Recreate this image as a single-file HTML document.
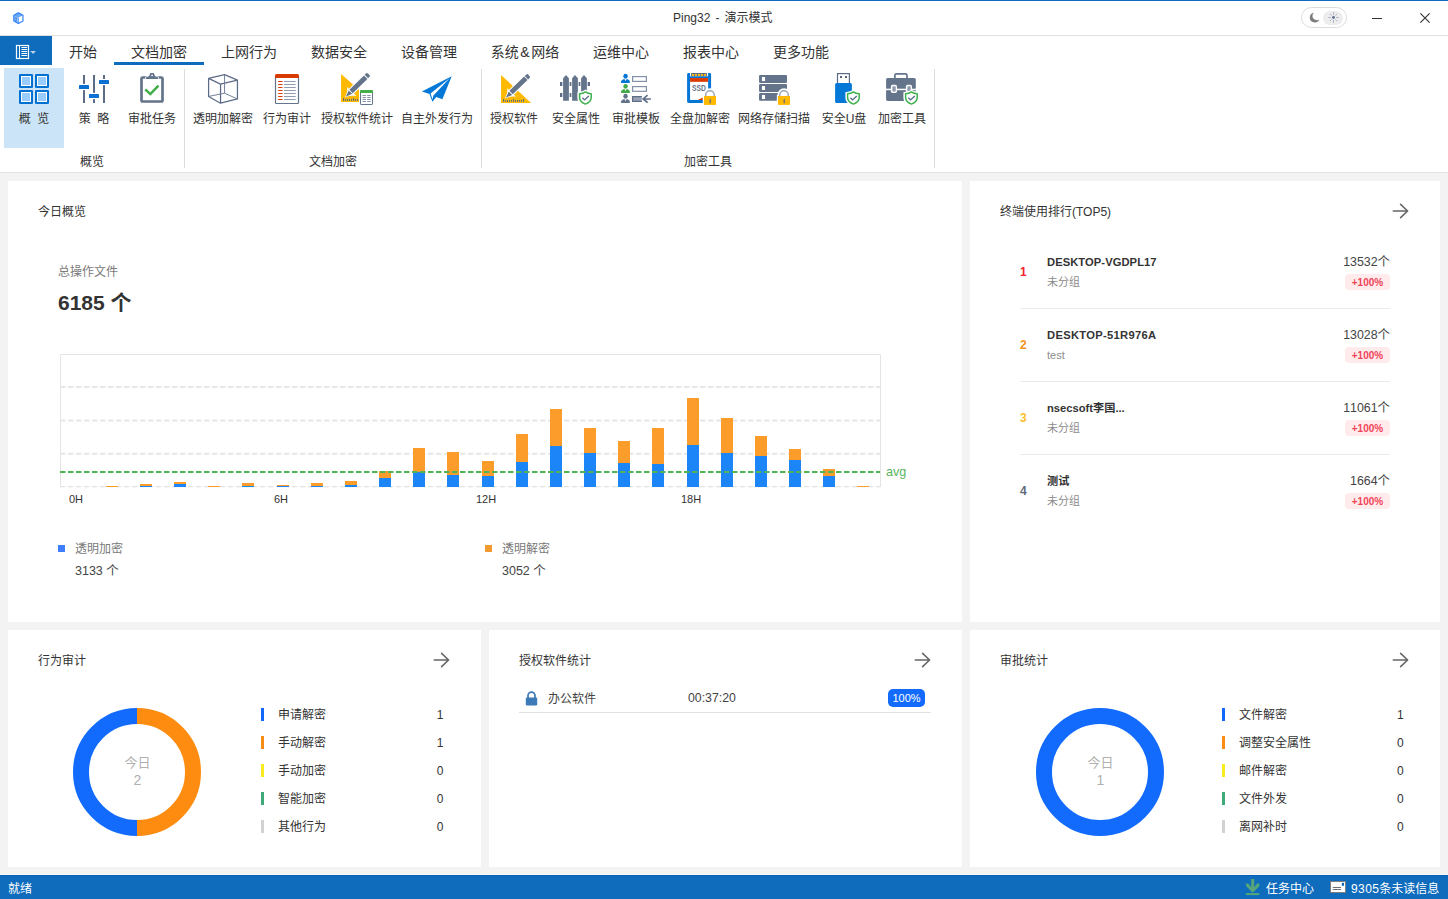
<!DOCTYPE html>
<html lang="zh-CN">
<head>
<meta charset="utf-8">
<title>Ping32 - 演示模式</title>
<style>
*{box-sizing:border-box;margin:0;padding:0}
html,body{width:1448px;height:899px;overflow:hidden;background:#f3f3f3}
body{position:relative;font-family:"Liberation Sans","Noto Sans CJK SC",sans-serif;font-size:12px;color:#333;-webkit-font-smoothing:antialiased}
.abs{position:absolute}
/* title bar */
#topline{position:absolute;left:0;top:0;width:1448px;height:1px;background:#0f6cbd}
#titlebar{position:absolute;left:0;top:1px;width:1448px;height:34px;background:#fff}
#titlesep{position:absolute;left:0;top:35px;width:1448px;height:1px;background:#e1e1e1}
#title{position:absolute;left:673px;top:10px;white-space:nowrap;font-size:12px;line-height:17px;color:#333;word-spacing:1.7px}
/* tabs */
#tabrow{position:absolute;left:0;top:36px;width:1448px;height:30px;background:#fff}
#filebtn{position:absolute;left:0;top:0;width:52px;height:29px;background:#0f6cbd}
.tab{position:absolute;top:0;height:30px;line-height:33px;font-size:14px;color:#333;text-align:center;white-space:nowrap}
.tab.on::after{content:"";position:absolute;left:0;right:0;top:26px;height:3px;background:#0f6cbd}
/* ribbon */
#ribbon{position:absolute;left:0;top:66px;width:1448px;height:106px;background:#fff}
#ribbonsep{position:absolute;left:0;top:172px;width:1448px;height:1px;background:#e3e3e3}
.rb{position:absolute;top:2px;height:80px;text-align:center;white-space:nowrap;font-size:12px;color:#333}
.rb.on{background:#cce4f7}
.rb .lbl{position:absolute;left:-20px;right:-20px;top:43px;line-height:16px;text-align:center}
.rb svg{position:absolute;top:5px;left:50%;margin-left:-16px;width:32px;height:32px;overflow:visible}
.gsep{position:absolute;top:3px;width:1px;height:99px;background:#dcdcdc}
.glbl{position:absolute;top:88px;line-height:16px;font-size:12px;color:#333;text-align:center;white-space:nowrap}
/* cards */
.card{position:absolute;background:#fff}
.ctitle{position:absolute;left:30px;top:23px;font-size:12px;line-height:16px;color:#333;white-space:nowrap}
.carrow{position:absolute;right:31px;top:22px;width:16px;height:16px}
/* card B rows */
.rk{font-size:12px;line-height:16px;font-weight:bold;width:10px;text-align:left}
.nm{font-size:11.2px;line-height:16px;font-weight:bold;color:#333;white-space:nowrap}
.gp{font-size:11px;line-height:16px;color:#8c8c8c;white-space:nowrap}
.vl{font-size:12.4px;line-height:16px;color:#444;white-space:nowrap;font-kerning:none}
.bd{width:45px;height:16px;border-radius:4px;background:#ffebec;color:#f04458;font-size:10px;line-height:17px;font-weight:bold;text-align:center}
.dn1{font-size:13px;line-height:16px;color:#b0b0b0;text-align:center}
.dn2{font-size:14px;line-height:16px;color:#b0b0b0;text-align:center}
.lt{font-size:12px;line-height:16px;color:#333;white-space:nowrap}
.lv{font-size:12px;line-height:16px;color:#333;white-space:nowrap}
/* status */
#status{position:absolute;left:0;top:875px;width:1448px;height:24px;background:#0f6cbd;color:#fff;font-size:12px;line-height:24px}
</style>
</head>
<body>
<div id="topline"></div>
<div id="titlebar"></div>
<div id="title">Ping32 - 演示模式</div>
<div id="titlesep"></div>
<svg class="abs" style="left:12.7px;top:11.75px" width="11.57" height="12.46" viewBox="0 0 13 14"><path d="M6.05,0.9L11.2,3.6V10L6.05,12.8L0.9,10V3.6Z" fill="#fff"/><path d="M6.05,0.9L11.2,3.6L6.05,6.3L0.9,3.6Z" fill="#5a9df9"/><path d="M0.9,3.6L6.05,6.3V12.8L0.9,10Z" fill="#7fb8fb"/><path d="M3.5,5.6V10.6" stroke="#2563d6" stroke-width="0.9"/><path d="M4.9,6.2V11.4" stroke="#b9dcff" stroke-width="0.7"/><path d="M3.4,2.4L8.6,5M5.9,1.2L11,3.9" stroke="#a8d0fd" stroke-width="0.5"/><path d="M6.05,0.9L11.2,3.6V10L6.05,12.8L0.9,10V3.6Z" fill="none" stroke="#2f7ff5" stroke-width="1.3" stroke-linejoin="round"/><path d="M6.05,6.5V12.6" stroke="#3b88f6" stroke-width="0.8"/></svg>
<div class="abs" style="left:1301px;top:7px;width:46px;height:21px;border:1px solid #dcdcdc;border-radius:11px;background:#fff"></div>
<div class="abs" style="left:1323px;top:10.5px;width:20px;height:14px;border-radius:7px;background:#ededed"></div>
<svg class="abs" style="left:1308px;top:11px" width="13" height="13" viewBox="0 0 13 13"><path d="M6,1.7A4.9,4.9 0 1 0 11.3,8.2A3.9,3.9 0 0 1 6,1.7Z" fill="#7d7d7d"/></svg>
<svg class="abs" style="left:1327px;top:11px" width="13" height="13" viewBox="-6.5 -6.5 13 13"><circle r="1.4" fill="#5f6f92"/><g stroke="#8b96ad" stroke-width="0.7" stroke-linecap="round"><path d="M0,-3.1V-4.8M0,3.1V4.8M-3.1,0H-4.8M3.1,0H4.8M-2.2,-2.2L-3.3,-3.3M2.2,2.2L3.3,3.3M-2.2,2.2L-3.3,3.3M2.2,-2.2L3.3,-3.3"/></g></svg>
<div class="abs" style="left:1372px;top:18px;width:10px;height:1px;background:#333"></div>
<svg class="abs" style="left:1419px;top:12px" width="12" height="12" viewBox="0 0 12 12"><path d="M1.4,1.4L10.6,10.6M10.6,1.4L1.4,10.6" stroke="#333" stroke-width="1.15" fill="none"/></svg>

<div id="tabrow">
  <div id="filebtn"><svg class="abs" style="left:15px;top:8px" width="23" height="16" viewBox="0 0 23 16"><rect x="1.5" y="1.5" width="12" height="13" fill="none" stroke="#fff" stroke-width="1.2"/><path d="M4.5,1.5V14.5" stroke="#fff" stroke-width="1"/><path d="M6.4,3.5h5.8M6.4,5.5h5.8M6.4,7.5h5.8M6.4,9.5h5.8M6.4,11.5h5.8" stroke="#fff" stroke-width="1"/><path d="M15.3,7H20.9L18.1,9.9Z" fill="#bdd6ee"/></svg></div>
  <div class="tab" style="left:52px;width:62px">开始</div>
  <div class="tab on" style="left:114px;width:90px">文档加密</div>
  <div class="tab" style="left:204px;width:90px">上网行为</div>
  <div class="tab" style="left:294px;width:90px">数据安全</div>
  <div class="tab" style="left:384px;width:90px">设备管理</div>
  <div class="tab" style="left:474px;width:102px">系统<span style="margin:0 1.7px">&amp;</span>网络</div>
  <div class="tab" style="left:576px;width:90px">运维中心</div>
  <div class="tab" style="left:666px;width:90px">报表中心</div>
  <div class="tab" style="left:756px;width:90px">更多功能</div>
</div>

<div id="ribbon">
  <!-- group 1 -->
  <div class="rb on" style="left:4px;width:60px">
    <svg viewBox="0 0 32 32"><rect x="1" y="1" width="14" height="14" rx="1.2" fill="#0070d2"/><rect x="3" y="3" width="10" height="10" fill="#fff"/><rect x="4" y="4" width="8" height="8" fill="#99ccff"/><rect x="17" y="1" width="14" height="14" rx="1.2" fill="#0070d2"/><rect x="19" y="3" width="10" height="10" fill="#fff"/><rect x="20" y="4" width="8" height="8" fill="#99ccff"/><rect x="1" y="17" width="14" height="14" rx="1.2" fill="#0070d2"/><rect x="3" y="19" width="10" height="10" fill="#fff"/><rect x="4" y="20" width="8" height="8" fill="#99ccff"/><rect x="17" y="17" width="14" height="14" rx="1.2" fill="#0070d2"/><rect x="19" y="19" width="10" height="10" fill="#fff"/><rect x="20" y="20" width="8" height="8" fill="#99ccff"/></svg>
    <div class="lbl">概&nbsp;&nbsp;览</div>
  </div>
  <div class="rb" style="left:64px;width:60px">
    <svg viewBox="0 0 32 32"><g fill="#5d6c86"><rect x="5" y="2" width="2" height="8.9"/><rect x="5" y="17.1" width="2" height="12.9"/><rect x="15" y="2" width="2" height="17.8"/><rect x="15" y="26.1" width="2" height="3.9"/><rect x="25" y="2" width="2" height="3.9"/><rect x="25" y="12.1" width="2" height="17.9"/></g><g fill="#0a70d3"><rect x="1" y="12" width="10" height="4" rx="0.5"/><rect x="11" y="21" width="10" height="4" rx="0.5"/><rect x="21" y="7" width="10" height="4" rx="0.5"/></g></svg>
    <div class="lbl">策&nbsp;&nbsp;略</div>
  </div>
  <div class="rb" style="left:122px;width:60px">
    <svg viewBox="0 0 32 32"><rect x="5.5" y="4.5" width="21" height="24" rx="1.2" fill="#fff" stroke="#64748b" stroke-width="2.7"/><path d="M9.8,5.9V4.6L13.2,3L13.8,0.9Q14,0.1 14.8,0.1H17.3Q18.1,0.1 18.3,0.9L18.9,3L22.3,4.6V5.9Z" fill="#64748b" stroke="#fff" stroke-width="1.4" paint-order="stroke"/><circle cx="16.05" cy="2.3" r="0.85" fill="#fff"/><path d="M9.3,16.4L14.3,21.1L22.5,12.6" fill="none" stroke="#3fae49" stroke-width="2.5"/></svg>
    <div class="lbl">审批任务</div>
  </div>
  <div class="gsep" style="left:184px"></div>
  <div class="glbl" style="left:0;width:184px">概览</div>

  <!-- group 2 -->
  <div class="rb" style="left:193px;width:60px">
    <svg viewBox="0 0 32 32"><g fill="none" stroke="#5d6c86" stroke-width="1.25" stroke-linejoin="round"><path d="M1.6,5.4L17.55,1.6L30.45,7.15L13.55,11.15Z"/><path d="M1.6,5.4V23.45L13.55,30.2V11.15M30.45,7.15V25.95L13.55,30.2"/><path d="M17.55,1.6V20.2L1.6,23.45M17.55,20.2L30.45,25.95" stroke-width="0.95" stroke="#6b7a92"/></g></svg>
    <div class="lbl">透明加解密</div>
  </div>
  <div class="rb" style="left:257px;width:60px">
    <svg viewBox="0 0 32 32"><rect x="4.5" y="2.5" width="23" height="28" rx="0.8" fill="#fff" stroke="#64748b" stroke-width="1.2"/><path d="M4,2.6Q4,1,5.6,1H26.4Q28,1,28,2.6V5H4Z" fill="#d83b01"/><path d="M7.2,8.5h4.3M7.2,11.5h4.3M7.2,14.5h4.3M7.2,17.5h4.3M7.2,20.5h4.3M7.2,23.5h4.3M7.2,26.5h4.3" stroke="#d83b01" stroke-width="1"/><path d="M13,8.5h11.7M13,11.5h11.7M13,14.5h11.7M13,17.5h11.7M13,20.5h11.7M13,23.5h11.7M13,26.5h11.7" stroke="#8491a6" stroke-width="0.9"/></svg>
    <div class="lbl">行为审计</div>
  </div>
  <div class="rb" style="left:327px;width:60px">
    <svg viewBox="0 0 32 32" style="margin-left:-16px"><path d="M0.07,0.9V28.9H18.03V16.65Z" fill="#ffb900"/><g fill="#566a8c"><rect x="2" y="25.1" width="1" height="2.75"/><rect x="4" y="25.95" width="1" height="1.9"/><rect x="6" y="25.95" width="1" height="1.9"/><rect x="8" y="25.95" width="1" height="1.9"/><rect x="10" y="25.95" width="1" height="1.9"/><rect x="12" y="25.1" width="1" height="2.75"/><rect x="14" y="25.95" width="1" height="1.9"/><rect x="16" y="25.95" width="1" height="1.9"/></g><path d="M6.2,14V22.8H15.4Z" fill="#fff"/><g transform="translate(4.8,23.7) rotate(-44.4)"><path d="M-1.2,0L6.4,-3.5H31.2Q33.2,-3.5 33.2,-1.8V1.8Q33.2,3.5 31.2,3.5H6.4Z" fill="#fff"/><path d="M0,0L6.5,-2.4V2.4Z" fill="#64748b"/><path d="M7.4,-2.4H27.9V2.4H7.4Z" fill="#64748b"/><path d="M28.8,-2.4H30.9Q32.1,-2.4 32.1,-1.2V1.2Q32.1,2.4 30.9,2.4H28.8Z" fill="#64748b"/></g><rect x="18.03" y="16" width="15" height="17" fill="#fff"/><rect x="19.5" y="17.5" width="12" height="14" rx="0.6" fill="#fff" stroke="#64748b" stroke-width="1"/><path d="M19,18.2Q19,17 20.2,17H30.8Q32,17 32,18.2V20H19Z" fill="#43b049"/><path d="M21.5,22.5h3.4M26.2,22.5h3.5M21.5,24.5h3.4M26.2,24.5h3.5M21.5,26.5h3.4M26.2,26.5h3.5M21.5,28.5h3.4M26.2,28.5h3.5" stroke="#8592aa" stroke-width="1"/></svg>
    <div class="lbl">授权软件统计</div>
  </div>
  <div class="rb" style="left:407px;width:60px">
    <svg viewBox="0 0 32 32"><path d="M0.9,18.5L30.7,3.3L21.4,26.2L15.3,24.1L11.4,28.8L8.5,20.9Z" fill="#0378d7"/><path d="M28.8,5.1L9.5,20.5L11.6,26.4L12.2,22.8Z" fill="#fff"/></svg>
    <div class="lbl">自主外发行为</div>
  </div>
  <div class="gsep" style="left:481px"></div>
  <div class="glbl" style="left:184px;width:298px">文档加密</div>
  <!-- group 3 -->
  <div class="rb" style="left:484px;width:60px">
    <svg viewBox="0 0 32 32" style="margin-left:-14px"><path d="M1.07,1.9V30H31.1Z" fill="#ffb900"/><g fill="#566a8c"><rect x="3" y="26.1" width="1" height="2.7"/><rect x="5" y="27" width="1" height="1.8"/><rect x="7" y="27" width="1" height="1.8"/><rect x="9" y="27" width="1" height="1.8"/><rect x="11" y="27" width="1" height="1.8"/><rect x="13" y="26.1" width="1" height="2.7"/><rect x="15" y="27" width="1" height="1.8"/><rect x="17" y="27" width="1" height="1.8"/><rect x="19" y="27" width="1" height="1.8"/><rect x="21" y="27" width="1" height="1.8"/><rect x="23" y="26.1" width="1" height="2.7"/></g><path d="M7.3,15.2V23.6H15.9Z" fill="#fff"/><g transform="translate(5.8,24.7) rotate(-44.1)"><path d="M-1.2,0L6.4,-3.5H31.2Q33.2,-3.5 33.2,-1.8V1.8Q33.2,3.5 31.2,3.5H6.4Z" fill="#fff"/><path d="M0,0L6.5,-2.4V2.4Z" fill="#64748b"/><path d="M7.4,-2.4H27.9V2.4H7.4Z" fill="#64748b"/><path d="M28.8,-2.4H30.9Q32.1,-2.4 32.1,-1.2V1.2Q32.1,2.4 30.9,2.4H28.8Z" fill="#64748b"/></g></svg>
    <div class="lbl">授权软件</div>
  </div>
  <div class="rb" style="left:546px;width:60px">
    <svg viewBox="0 0 32 32"><rect x="0" y="9" width="2" height="4" fill="#5d6c86"/><rect x="10" y="9" width="1" height="4" fill="#5d6c86"/><rect x="19" y="9" width="1" height="4" fill="#5d6c86"/><rect x="28" y="9" width="2" height="4" fill="#5d6c86"/><rect x="2" y="9" width="1" height="4" fill="#c6ccd6"/><rect x="9" y="9" width="1" height="4" fill="#c6ccd6"/><rect x="11" y="9" width="1" height="4" fill="#c6ccd6"/><rect x="18" y="9" width="1" height="4" fill="#c6ccd6"/><rect x="20" y="9" width="1" height="4" fill="#c6ccd6"/><rect x="27" y="9" width="1" height="4" fill="#c6ccd6"/><rect x="0" y="20" width="2" height="4" fill="#5d6c86"/><rect x="10" y="20" width="1" height="4" fill="#5d6c86"/><rect x="2" y="20" width="1" height="4" fill="#c6ccd6"/><rect x="9" y="20" width="1" height="4" fill="#c6ccd6"/><rect x="11" y="20" width="1" height="4" fill="#c6ccd6"/><g fill="#64748b"><path d="M3.1,5.25L6,2.05L8.9,5.25V27.8H3.1Z"/><path d="M12.1,5.25L15,2.05L17.9,5.25V27.8H12.1Z"/><path d="M21.1,5.25L24,2.05L26.9,5.25V20H21.1Z"/></g><path d="M25.4,16.6C23.5,18.3 20.8,19 17.4,19.2V24.4C17.4,29 21,31.9 25.4,33.5C29.8,31.9 33.4,29 33.4,24.4V19.2C30,19 27.3,18.3 25.4,16.6Z" fill="#fff"/><path d="M25.4,18.9C23.8,20.1 21.8,20.7 19.6,20.8V24.4C19.6,27.6 22.2,29.8 25.4,31.1C28.6,29.8 31.2,27.6 31.2,24.4V20.8C29,20.7 27,20.1 25.4,18.9Z" fill="#fff" stroke="#3db24b" stroke-width="1.5" stroke-linejoin="round"/><path d="M22.4,24.7L24.6,26.9L28.8,23.1" fill="none" stroke="#5d6c86" stroke-width="1.4"/></svg>
    <div class="lbl">安全属性</div>
  </div>
  <div class="rb" style="left:606px;width:60px">
    <svg viewBox="0 0 32 32"><g fill="#0476d6" transform="translate(0,0)"><ellipse cx="5.55" cy="3.3" rx="2.2" ry="2.45"/><path d="M1.6,9.9Q0.9,9.9 0.9,9.2Q0.9,7.4 2.6,6.7L3.9,6L4.1,5.4L5.55,7.9L7,5.4L7.2,6L8.5,6.7Q10,7.4 10,9.2Q10,9.9 9.3,9.9Z"/></g><g fill="#43a94c" transform="translate(0,10.05)"><ellipse cx="5.55" cy="3.3" rx="2.2" ry="2.45"/><path d="M1.6,9.9Q0.9,9.9 0.9,9.2Q0.9,7.4 2.6,6.7L3.9,6L4.1,5.4L5.55,7.9L7,5.4L7.2,6L8.5,6.7Q10,7.4 10,9.2Q10,9.9 9.3,9.9Z"/></g><g fill="#64748b" transform="translate(0,20)"><ellipse cx="5.55" cy="3.3" rx="2.2" ry="2.45"/><path d="M1.6,9.9Q0.9,9.9 0.9,9.2Q0.9,7.4 2.6,6.7L3.9,6L4.1,5.4L5.55,7.9L7,5.4L7.2,6L8.5,6.7Q10,7.4 10,9.2Q10,9.9 9.3,9.9Z"/></g><rect x="12.6" y="3.6" width="13.8" height="4.8" fill="#fff" stroke="#8391a8" stroke-width="1.2"/><rect x="12.6" y="13.6" width="13.8" height="4.7" fill="#fff" stroke="#8391a8" stroke-width="1.2"/><rect x="12" y="23" width="9.8" height="5.9" fill="#97a2b5"/><path d="M21.8,23.6H12.6V28.3H21.8" fill="none" stroke="#5d6c86" stroke-width="1.2"/><path d="M30.9,25.95H23.8M27.6,22.2L23.1,25.95L27.6,29.7" fill="none" stroke="#5d6c86" stroke-width="1.6"/></svg>
    <div class="lbl">审批模板</div>
  </div>
  <div class="rb" style="left:670px;width:60px">
    <svg viewBox="0 0 32 32"><path d="M3.1,1.4Q3.1,0 4.5,0H6.06V3.13H24.12V0H25.7Q27.08,0 27.08,1.4V28.5Q27.08,29.9 25.7,29.9H4.5Q3.1,29.9 3.1,28.5Z" fill="#0476d6"/><rect x="6.06" y="5.03" width="18.06" height="21.91" fill="#fff"/><rect x="7.08" y="0" width="15.77" height="3.13" fill="#5d6c86"/><g fill="#ffc20e"><rect x="7.95" y="1" width="2" height="1.9"/><rect x="10.9" y="1" width="2" height="1.9"/><rect x="13.95" y="1" width="2" height="1.9"/><rect x="16.9" y="1" width="2" height="1.9"/><rect x="19.95" y="1" width="2" height="1.9"/></g><rect x="6.06" y="5.03" width="17.9" height="3.8" fill="#da3b01"/><text x="14.95" y="17.8" font-family="Liberation Sans, sans-serif" font-size="9" font-weight="bold" fill="#66758c" text-anchor="middle" textLength="13.7" lengthAdjust="spacingAndGlyphs">SSD</text><path d="M13.76,26.94L18.83,24.4V26.94Z" fill="#da3b01"/><path d="M18.83,33V21.9H19.4A6.6,6.6 0 0 1 32.6,21.9H33.2V33Z" fill="#fff"/><path d="M21.7,23.3V22.1A4.3,4.3 0 0 1 30.3,22.1V23.3" fill="none" stroke="#9ca7b9" stroke-width="1.5"/><rect x="20" y="23" width="12" height="8.9" fill="#ffb900"/><path d="M26.25,25.8L27.3,27.2H26.8V30.2H25.6V27.2H25.2Z" fill="#5d6c86"/></svg>
    <div class="lbl">全盘加解密</div>
  </div>
  <div class="rb" style="left:744px;width:60px">
    <svg viewBox="0 0 32 32"><g fill="#64748b"><rect x="1.05" y="2" width="27.95" height="7.9" rx="1"/><rect x="1.05" y="11.05" width="27.95" height="7.85" rx="1"/><rect x="1.05" y="20.05" width="27.95" height="7.8" rx="1"/></g><g fill="#fff"><rect x="3.95" y="4" width="3.1" height="4.1"/><rect x="3.95" y="13" width="3.1" height="4"/><rect x="3.95" y="21.95" width="3.1" height="4.1"/></g><path d="M18.83,33V21.9H19.4A6.6,6.6 0 0 1 32.6,21.9H33.2V33Z" fill="#fff"/><path d="M21.7,23.3V22.1A4.3,4.3 0 0 1 30.3,22.1V23.3" fill="none" stroke="#9ca7b9" stroke-width="1.5"/><rect x="20" y="23" width="12" height="8.9" fill="#ffb900"/><path d="M26.25,25.8L27.3,27.2H26.8V30.2H25.6V27.2H25.2Z" fill="#5d6c86"/></svg>
    <div class="lbl">网络存储扫描</div>
  </div>
  <div class="rb" style="left:814px;width:60px">
    <svg viewBox="0 0 32 32"><rect x="9.5" y="0.6" width="11.9" height="10" fill="#fff" stroke="#5d6c86" stroke-width="1.2"/><rect x="12" y="3.1" width="2" height="1.9" fill="#4b5a75"/><rect x="17" y="3.1" width="2" height="1.9" fill="#4b5a75"/><rect x="7.1" y="9.9" width="16.8" height="20" rx="1.5" fill="#0378d7"/><path d="M25.4,16.6C23.5,18.3 20.8,19 17.4,19.2V24.4C17.4,29 21,31.9 25.4,33.5C29.8,31.9 33.4,29 33.4,24.4V19.2C30,19 27.3,18.3 25.4,16.6Z" fill="#fff"/><path d="M25.4,18.9C23.8,20.1 21.8,20.7 19.6,20.8V24.4C19.6,27.6 22.2,29.8 25.4,31.1C28.6,29.8 31.2,27.6 31.2,24.4V20.8C29,20.7 27,20.1 25.4,18.9Z" fill="#fff" stroke="#3db24b" stroke-width="1.5" stroke-linejoin="round"/><path d="M22.4,24.7L24.6,26.9L28.8,23.1" fill="none" stroke="#5d6c86" stroke-width="1.4"/></svg>
    <div class="lbl">安全U盘</div>
  </div>
  <div class="rb" style="left:872px;width:60px">
    <svg viewBox="0 0 32 32"><path d="M8.9,5.5V2.4Q8.9,0.9 10.4,0.9H19.5Q21,0.9 21,2.4V5.5" fill="none" stroke="#64748b" stroke-width="1.7"/><rect x="0.1" y="5" width="29.7" height="22.9" rx="1.6" fill="#64748b"/><rect x="0" y="15.7" width="30" height="1.5" fill="#fff"/><rect x="4.9" y="11.8" width="6.1" height="8.2" rx="1.7" fill="#fff"/><rect x="6.4" y="13.3" width="3.3" height="5.3" rx="0.6" fill="#8e99ad"/><rect x="19.9" y="11.8" width="6.1" height="8.2" rx="1.7" fill="#fff"/><rect x="21.4" y="13.3" width="3.3" height="5.3" rx="0.6" fill="#8e99ad"/><path d="M25.4,16.6C23.5,18.3 20.8,19 17.4,19.2V24.4C17.4,29 21,31.9 25.4,33.5C29.8,31.9 33.4,29 33.4,24.4V19.2C30,19 27.3,18.3 25.4,16.6Z" fill="#fff"/><path d="M25.4,18.9C23.8,20.1 21.8,20.7 19.6,20.8V24.4C19.6,27.6 22.2,29.8 25.4,31.1C28.6,29.8 31.2,27.6 31.2,24.4V20.8C29,20.7 27,20.1 25.4,18.9Z" fill="#fff" stroke="#3db24b" stroke-width="1.5" stroke-linejoin="round"/><path d="M22.4,24.7L24.6,26.9L28.8,23.1" fill="none" stroke="#5d6c86" stroke-width="1.4"/></svg>
    <div class="lbl">加密工具</div>
  </div>
  <div class="gsep" style="left:934px"></div>
  <div class="glbl" style="left:481px;width:454px">加密工具</div>
</div>
<div id="ribbonsep"></div>

<div class="card" id="cA" style="left:8px;top:181px;width:954px;height:441px">
  <div class="ctitle">今日概览</div>
  <!--CARD_A_START-->
  <div class="abs" style="left:50px;top:83px;font-size:12px;line-height:16px;color:#7a7a7a;white-space:nowrap">总操作文件</div>
  <div class="abs" style="left:50px;top:109px;font-size:21px;line-height:26px;font-weight:bold;color:#333;white-space:nowrap">6185 个</div>
  <svg class="abs" style="left:42px;top:169px" width="900" height="170" viewBox="0 0 900 170">
  <path d="M10.5,137V4.5H830.5V137" fill="none" stroke="#e4e4e4" stroke-width="1"/>
  <path d="M10,37H830" stroke="#e6e6e6" stroke-width="2" stroke-dasharray="5.5 2.5" fill="none"/>
  <path d="M10,70.5H830" stroke="#e6e6e6" stroke-width="2" stroke-dasharray="5.5 2.5" fill="none"/>
  <path d="M10,103.75H830" stroke="#e6e6e6" stroke-width="2" stroke-dasharray="5.5 2.5" fill="none"/>
  <path d="M10,136.60000000000002H830" stroke="#e2e2e2" stroke-width="1.2" stroke-dasharray="5.5 2.5" fill="none"/>
  <rect x="56" y="136" width="12" height="1" fill="#fc9d2b"/>
  <rect x="90" y="136" width="12" height="1" fill="#1c85f8"/>
  <rect x="90" y="134" width="12" height="2" fill="#fc9d2b"/>
  <rect x="124" y="134" width="12" height="3" fill="#1c85f8"/>
  <rect x="124" y="132" width="12" height="2" fill="#fc9d2b"/>
  <rect x="158" y="136" width="12" height="1" fill="#fc9d2b"/>
  <rect x="192" y="136" width="12" height="1" fill="#1c85f8"/>
  <rect x="192" y="133" width="12" height="3" fill="#fc9d2b"/>
  <rect x="227" y="136" width="12" height="1" fill="#1c85f8"/>
  <rect x="227" y="135" width="12" height="1" fill="#fc9d2b"/>
  <rect x="261" y="136" width="12" height="1" fill="#1c85f8"/>
  <rect x="261" y="133" width="12" height="3" fill="#fc9d2b"/>
  <rect x="295" y="135" width="12" height="2" fill="#1c85f8"/>
  <rect x="295" y="131" width="12" height="4" fill="#fc9d2b"/>
  <rect x="329" y="128" width="12" height="9" fill="#1c85f8"/>
  <rect x="329" y="121" width="12" height="7" fill="#fc9d2b"/>
  <rect x="363" y="122" width="12" height="15" fill="#1c85f8"/>
  <rect x="363" y="98" width="12" height="24" fill="#fc9d2b"/>
  <rect x="397" y="125" width="12" height="12" fill="#1c85f8"/>
  <rect x="397" y="102" width="12" height="23" fill="#fc9d2b"/>
  <rect x="432" y="126" width="12" height="11" fill="#1c85f8"/>
  <rect x="432" y="111" width="12" height="15" fill="#fc9d2b"/>
  <rect x="466" y="112" width="12" height="25" fill="#1c85f8"/>
  <rect x="466" y="84" width="12" height="28" fill="#fc9d2b"/>
  <rect x="500" y="96" width="12" height="41" fill="#1c85f8"/>
  <rect x="500" y="59" width="12" height="37" fill="#fc9d2b"/>
  <rect x="534" y="103" width="12" height="34" fill="#1c85f8"/>
  <rect x="534" y="78" width="12" height="25" fill="#fc9d2b"/>
  <rect x="568" y="113" width="12" height="24" fill="#1c85f8"/>
  <rect x="568" y="91" width="12" height="22" fill="#fc9d2b"/>
  <rect x="602" y="114" width="12" height="23" fill="#1c85f8"/>
  <rect x="602" y="78" width="12" height="36" fill="#fc9d2b"/>
  <rect x="637" y="95" width="12" height="42" fill="#1c85f8"/>
  <rect x="637" y="48" width="12" height="47" fill="#fc9d2b"/>
  <rect x="671" y="103" width="12" height="34" fill="#1c85f8"/>
  <rect x="671" y="68" width="12" height="35" fill="#fc9d2b"/>
  <rect x="705" y="106" width="12" height="31" fill="#1c85f8"/>
  <rect x="705" y="86" width="12" height="20" fill="#fc9d2b"/>
  <rect x="739" y="110" width="12" height="27" fill="#1c85f8"/>
  <rect x="739" y="99" width="12" height="11" fill="#fc9d2b"/>
  <rect x="773" y="126" width="12" height="11" fill="#1c85f8"/>
  <rect x="773" y="119" width="12" height="7" fill="#fc9d2b"/>
  <rect x="807" y="136" width="12" height="1" fill="#fc9d2b"/>
  <path d="M10,122H830" stroke="#52b256" stroke-width="2" stroke-dasharray="5.5 2.5" fill="none"/>
  <text x="836" y="126.39999999999998" font-family="Liberation Sans, sans-serif" font-size="12.6" fill="#5bb55f">avg</text>
  <text x="26" y="153.2" text-anchor="middle" font-family="Liberation Sans, sans-serif" font-size="11" fill="#333">0H</text>
  <text x="231" y="153.2" text-anchor="middle" font-family="Liberation Sans, sans-serif" font-size="11" fill="#333">6H</text>
  <text x="436" y="153.2" text-anchor="middle" font-family="Liberation Sans, sans-serif" font-size="11" fill="#333">12H</text>
  <text x="641" y="153.2" text-anchor="middle" font-family="Liberation Sans, sans-serif" font-size="11" fill="#333">18H</text>
  </svg>
  <div class="abs" style="left:50px;top:364px;width:7px;height:7px;background:#3f7ffd"></div>
  <div class="abs" style="left:67px;top:360px;font-size:12px;line-height:16px;color:#7a7a7a;white-space:nowrap">透明加密</div>
  <div class="abs" style="left:67px;top:382px;font-size:12.5px;line-height:16px;color:#444;white-space:nowrap">3133 个</div>
  <div class="abs" style="left:477px;top:364px;width:7px;height:7px;background:#f29a2e"></div>
  <div class="abs" style="left:494px;top:360px;font-size:12px;line-height:16px;color:#7a7a7a;white-space:nowrap">透明解密</div>
  <div class="abs" style="left:494px;top:382px;font-size:12.5px;line-height:16px;color:#444;white-space:nowrap">3052 个</div>
  <!--CARD_A_END-->
</div>
<div class="card" id="cB" style="left:970px;top:181px;width:470px;height:441px">
  <div class="ctitle">终端使用排行(TOP5)</div>
  <!--CARD_B_START-->
  <svg class="carrow" viewBox="0 0 17 16" style="width:17px;height:16px"><path d="M1.3,8H15.6M8.6,1.4L15.6,8L8.6,14.6" fill="none" stroke="#666" stroke-width="1.6" stroke-linecap="round" stroke-linejoin="round"/></svg>
  <div class="abs rk" style="left:50px;top:83px;color:#f5222d">1</div>
  <div class="abs nm" style="left:77px;top:73px;letter-spacing:0.07px">DESKTOP-VGDPL17</div>
  <div class="abs gp" style="left:77px;top:93px">未分组</div>
  <div class="abs vl" style="right:50px;top:73px">13532个</div>
  <div class="abs bd" style="right:50px;top:93px">+100%</div>
  <div class="abs" style="left:50px;top:127px;width:370px;height:1px;background:#ebebeb"></div>
  <div class="abs rk" style="left:50px;top:156px;color:#f7931e">2</div>
  <div class="abs nm" style="left:77px;top:146px;letter-spacing:0.3px">DESKTOP-51R976A</div>
  <div class="abs gp" style="left:77px;top:166px">test</div>
  <div class="abs vl" style="right:50px;top:146px">13028个</div>
  <div class="abs bd" style="right:50px;top:166px">+100%</div>
  <div class="abs" style="left:50px;top:200px;width:370px;height:1px;background:#ebebeb"></div>
  <div class="abs rk" style="left:50px;top:229px;color:#fbc02d">3</div>
  <div class="abs nm" style="left:77px;top:219px">nsecsoft李国...</div>
  <div class="abs gp" style="left:77px;top:239px">未分组</div>
  <div class="abs vl" style="right:50px;top:219px">11061个</div>
  <div class="abs bd" style="right:50px;top:239px">+100%</div>
  <div class="abs" style="left:50px;top:273px;width:370px;height:1px;background:#ebebeb"></div>
  <div class="abs rk" style="left:50px;top:302px;color:#5f6b7a">4</div>
  <div class="abs nm" style="left:77px;top:292px">测试</div>
  <div class="abs gp" style="left:77px;top:312px">未分组</div>
  <div class="abs vl" style="right:50px;top:292px">1664个</div>
  <div class="abs bd" style="right:50px;top:312px">+100%</div>
  <!--CARD_B_END-->
</div>
<div class="card" id="cC" style="left:8px;top:630px;width:473px;height:237px">
  <div class="ctitle">行为审计</div>
  <!--CARD_C_START-->
  <svg class="carrow" viewBox="0 0 17 16" style="width:17px;height:16px"><path d="M1.3,8H15.6M8.6,1.4L15.6,8L8.6,14.6" fill="none" stroke="#666" stroke-width="1.6" stroke-linecap="round" stroke-linejoin="round"/></svg>
  <svg class="abs" style="left:59.400000000000006px;top:71.6px" width="140" height="140" viewBox="-70 -70 140 140"><path d="M0,-56A56,56 0 0 1 0,56" fill="none" stroke="#fd8c10" stroke-width="16"/><path d="M0,56A56,56 0 0 1 0,-56" fill="none" stroke="#126bfd" stroke-width="16"/></svg>
  <div class="abs dn1" style="left:89.4px;top:125px;width:80px">今日</div>
  <div class="abs dn2" style="left:89.4px;top:142px;width:80px">2</div>
  <div class="abs" style="left:253px;top:78px;width:3px;height:13px;background:#1268fb"></div>
  <div class="abs lt" style="left:270px;top:77px">申请解密</div>
  <div class="abs lv" style="right:37.5px;top:77px">1</div>
  <div class="abs" style="left:253px;top:106px;width:3px;height:13px;background:#fa8c16"></div>
  <div class="abs lt" style="left:270px;top:105px">手动解密</div>
  <div class="abs lv" style="right:37.5px;top:105px">1</div>
  <div class="abs" style="left:253px;top:134px;width:3px;height:13px;background:#f8ec1f"></div>
  <div class="abs lt" style="left:270px;top:133px">手动加密</div>
  <div class="abs lv" style="right:37.5px;top:133px">0</div>
  <div class="abs" style="left:253px;top:162px;width:3px;height:13px;background:#3fa97a"></div>
  <div class="abs lt" style="left:270px;top:161px">智能加密</div>
  <div class="abs lv" style="right:37.5px;top:161px">0</div>
  <div class="abs" style="left:253px;top:190px;width:3px;height:13px;background:#d2d2d2"></div>
  <div class="abs lt" style="left:270px;top:189px">其他行为</div>
  <div class="abs lv" style="right:37.5px;top:189px">0</div>
  <!--CARD_C_END-->
</div>
<div class="card" id="cD" style="left:489px;top:630px;width:473px;height:237px">
  <div class="ctitle">授权软件统计</div>
  <!--CARD_D_START-->
  <svg class="carrow" viewBox="0 0 17 16" style="width:17px;height:16px"><path d="M1.3,8H15.6M8.6,1.4L15.6,8L8.6,14.6" fill="none" stroke="#666" stroke-width="1.6" stroke-linecap="round" stroke-linejoin="round"/></svg>
  <svg class="abs" style="left:36px;top:61px" width="13" height="15" viewBox="0 0 13 15"><path d="M3,7V4.6A3.5,3.5 0 0 1 10,4.6V7" fill="none" stroke="#3d7ab8" stroke-width="1.7"/><rect x="0.8" y="6.4" width="11.4" height="8" rx="1.2" fill="#3d7ab8"/></svg>
  <div class="abs" style="left:59px;top:61px;font-size:12px;line-height:16px;color:#444;white-space:nowrap">办公软件</div>
  <div class="abs" style="left:199px;top:60px;font-size:12.3px;line-height:16px;color:#444;white-space:nowrap">00:37:20</div>
  <div class="abs" style="left:399px;top:59px;width:37px;height:18px;border-radius:5px;background:#126bfd;color:#fff;font-size:11px;line-height:19px;text-align:center">100%</div>
  <div class="abs" style="left:30px;top:82px;width:412px;height:1px;background:#e2e2e2"></div>
  <!--CARD_D_END-->
</div>
<div class="card" id="cE" style="left:970px;top:630px;width:470px;height:237px">
  <div class="ctitle">审批统计</div>
  <!--CARD_E_START-->
  <svg class="carrow" viewBox="0 0 17 16" style="width:17px;height:16px"><path d="M1.3,8H15.6M8.6,1.4L15.6,8L8.6,14.6" fill="none" stroke="#666" stroke-width="1.6" stroke-linecap="round" stroke-linejoin="round"/></svg>
  <svg class="abs" style="left:60.40000000000009px;top:71.6px" width="140" height="140" viewBox="-70 -70 140 140"><circle cx="0" cy="0" r="56" fill="none" stroke="#126bfd" stroke-width="16"/></svg>
  <div class="abs dn1" style="left:90.40000000000009px;top:125px;width:80px">今日</div>
  <div class="abs dn2" style="left:90.40000000000009px;top:142px;width:80px">1</div>
  <div class="abs" style="left:252px;top:78px;width:3px;height:13px;background:#1268fb"></div>
  <div class="abs lt" style="left:269px;top:77px">文件解密</div>
  <div class="abs lv" style="right:36.299999999999955px;top:77px">1</div>
  <div class="abs" style="left:252px;top:106px;width:3px;height:13px;background:#fa8c16"></div>
  <div class="abs lt" style="left:269px;top:105px">调整安全属性</div>
  <div class="abs lv" style="right:36.299999999999955px;top:105px">0</div>
  <div class="abs" style="left:252px;top:134px;width:3px;height:13px;background:#f8ec1f"></div>
  <div class="abs lt" style="left:269px;top:133px">邮件解密</div>
  <div class="abs lv" style="right:36.299999999999955px;top:133px">0</div>
  <div class="abs" style="left:252px;top:162px;width:3px;height:13px;background:#3fa97a"></div>
  <div class="abs lt" style="left:269px;top:161px">文件外发</div>
  <div class="abs lv" style="right:36.299999999999955px;top:161px">0</div>
  <div class="abs" style="left:252px;top:190px;width:3px;height:13px;background:#d2d2d2"></div>
  <div class="abs lt" style="left:269px;top:189px">离网补时</div>
  <div class="abs lv" style="right:36.299999999999955px;top:189px">0</div>
  <!--CARD_E_END-->
</div>

<div class="abs" style="left:0;top:874px;width:1448px;height:1px;background:#fbf8f5"></div>
<div id="status"><div class="abs" style="left:0;top:0;width:1448px;height:1px;background:#0862b9"></div>
  <span class="abs" style="left:8px;top:2px">就绪</span>
  <svg class="abs" style="left:1245px;top:3px" width="16" height="18" viewBox="0 0 16 18"><path d="M6.2,1H9.2V9.2L12.2,5.6H14.4V8L7.7,14.8L1,8V5.6H3.2L6.2,9.2Z" fill="#57a67a"/><rect x="0.8" y="15.1" width="13.5" height="2" fill="#57a67a"/></svg>
  <span class="abs" style="left:1266px;top:2px;white-space:nowrap">任务中心</span>
  <svg class="abs" style="left:1330px;top:6px" width="16" height="12" viewBox="0 0 16 12"><rect x="0.5" y="0.5" width="15" height="11" fill="#fff" stroke="#7f7f7f" stroke-width="1"/><rect x="11.8" y="1.8" width="2.2" height="3" fill="#0f6cbd"/><path d="M2.8,6.5H11M2.8,8.5H11" stroke="#6e6e6e" stroke-width="1"/></svg>
  <span class="abs" style="left:1351px;top:2px;white-space:nowrap"><span style="letter-spacing:0.4px">9305</span>条未读信息</span>
</div>
</body>
</html>
